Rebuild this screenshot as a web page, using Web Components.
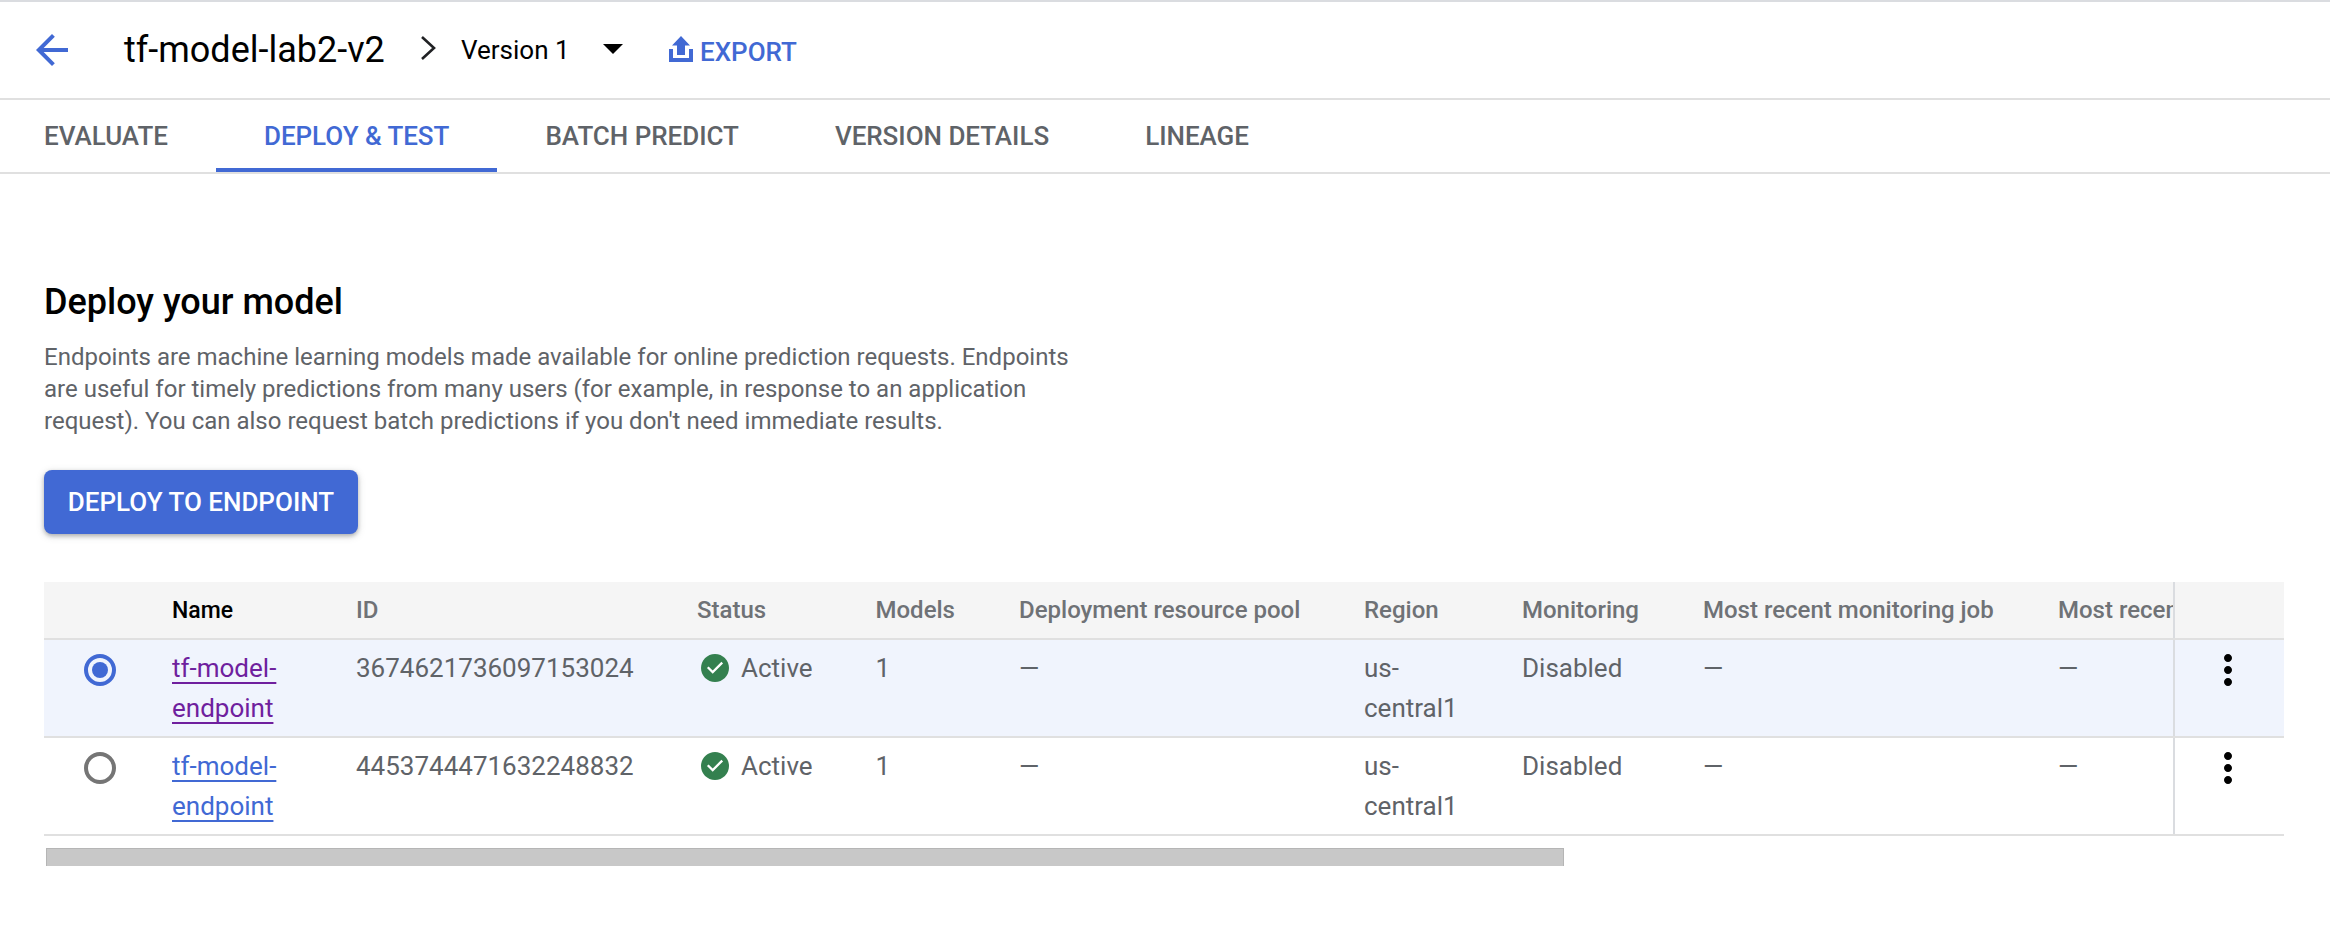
<!DOCTYPE html>
<html lang="en"><head><meta charset="utf-8"><title>Deploy your model</title>
<style>
html,body{margin:0;padding:0;background:#fff}
body{font-family:Roboto,"Liberation Sans",sans-serif;width:2330px;height:930px;overflow:hidden}
</style></head><body>
<app-page>
  <model-header title-text="tf-model-lab2-v2" version="Version 1"></model-header>
  <model-tabs>
    <tab-item style="--pl:44px;--pr:48px">EVALUATE</tab-item>
    <tab-item active>DEPLOY &amp; TEST</tab-item>
    <tab-item>BATCH PREDICT</tab-item>
    <tab-item>VERSION DETAILS</tab-item>
    <tab-item>LINEAGE</tab-item>
  </model-tabs>
  <deploy-intro>
    <span slot="title">Deploy your model</span>
    Endpoints are machine learning models made available for online prediction requests. Endpoints are useful for timely predictions from many users (for example, in response to an application request). You can also request batch predictions if you don't need immediate results.
    <span slot="action">DEPLOY TO ENDPOINT</span>
  </deploy-intro>
  <endpoint-table>
    <table-row head>
      <table-cell></table-cell><table-cell head strong>Name</table-cell><table-cell head>ID</table-cell><table-cell head>Status</table-cell><table-cell head>Models</table-cell><table-cell head>Deployment resource pool</table-cell><table-cell head>Region</table-cell><table-cell head>Monitoring</table-cell><table-cell head>Most recent monitoring job</table-cell><table-cell head>Most recent monitoring job status</table-cell><table-cell head action></table-cell>
    </table-row>
    <table-row selected>
      <table-cell><radio-mark checked></radio-mark></table-cell><table-cell><end-link visited>tf-model- endpoint</end-link></table-cell><table-cell>3674621736097153024</table-cell><table-cell><status-active>Active</status-active></table-cell><table-cell>1</table-cell><table-cell>—</table-cell><table-cell>us-<br>central1</table-cell><table-cell>Disabled</table-cell><table-cell>—</table-cell><table-cell>—</table-cell><table-cell action><kebab-icon></kebab-icon></table-cell>
    </table-row>
    <table-row>
      <table-cell><radio-mark></radio-mark></table-cell><table-cell><end-link>tf-model- endpoint</end-link></table-cell><table-cell>4453744471632248832</table-cell><table-cell><status-active>Active</status-active></table-cell><table-cell>1</table-cell><table-cell>—</table-cell><table-cell>us-<br>central1</table-cell><table-cell>Disabled</table-cell><table-cell>—</table-cell><table-cell>—</table-cell><table-cell action><kebab-icon></kebab-icon></table-cell>
    </table-row>
  </endpoint-table>
</app-page>
<script>
function def(name, css, html){
  customElements.define(name, class extends HTMLElement{
    constructor(){super();const r=this.attachShadow({mode:'open'});
      r.innerHTML='<style>'+css+'</style>'+html;}
  });
}
const BLUE='#4169d4';
def('app-page',':host{display:block;border-top:2px solid #dadce0;font-family:Roboto,"Liberation Sans",sans-serif}','<slot></slot>');

customElements.define('model-header', class extends HTMLElement{
  constructor(){super();this.attachShadow({mode:'open'});}
  connectedCallback(){
    this.shadowRoot.innerHTML=`<style>
    :host{display:flex;align-items:center;height:96px;border-bottom:2px solid #e0e0e0;box-sizing:content-box}
    svg{display:block;flex:none}
    .back{margin-left:28px;width:48px;height:48px}
    .title{margin-left:48px;font-size:36px;line-height:40px;color:#000;width:262px;white-space:nowrap}
    .chev{margin-left:22px;width:40px;height:40px;margin-top:-4px}
    .ver{margin-left:13px;font-size:26px;line-height:32px;color:#000;width:118px;white-space:nowrap}
    .tri{margin-left:24px;width:20px;height:10px;margin-top:-2px}
    .exp{margin-left:46px;width:24px;height:26px;margin-top:-2px}
    .lab{margin-left:7px;font-size:26px;line-height:32px;font-weight:500;color:${BLUE};margin-top:4px}
    </style>
    <svg class="back" viewBox="0 0 24 24" fill="${BLUE}"><path d="M20 11H7.83l5.59-5.59L12 4l-8 8 8 8 1.41-1.41L7.83 13H20v-2z"/></svg>
    <span class="title">${this.getAttribute('title-text')}</span>
    <svg class="chev" viewBox="0 0 40 40" fill="none" stroke="#202124" stroke-width="2.6"><path d="M14 9l12 11-12 11"/></svg>
    <span class="ver">${this.getAttribute('version')}</span>
    <svg class="tri" viewBox="0 0 20 10" fill="#000"><path d="M0 0h20L10 10z"/></svg>
    <svg class="exp" viewBox="0 0 24 26" fill="${BLUE}"><path d="M12 0l9 9.5h-5V19H8V9.5H3z"/><path d="M0 13h4v9h16v-9h4v13H0z"/></svg>
    <span class="lab">EXPORT</span>`;
  }
});

def('model-tabs',':host{display:flex;height:72px;border-bottom:2px solid #e0e0e0}','<slot></slot>');
def('tab-item',`:host{display:block;box-sizing:border-box;height:72px;padding:10px var(--pr,48px) 0 var(--pl,48px);font-size:26px;font-weight:500;line-height:52px;color:#5f6368;white-space:nowrap;letter-spacing:-.03px}
:host([active]){color:${BLUE};border-bottom:4px solid ${BLUE}}`,'<slot></slot>');

def('deploy-intro',`:host{display:block;padding:108px 0 0 44px}
.t{font-size:36px;line-height:40px;font-weight:500;color:#000}
.p{margin-top:19px;width:1040px;font-size:24px;line-height:32px;color:#5f6368}
.b{display:inline-block;box-sizing:border-box;margin-top:33px;height:64px;width:314px;border-radius:8px;background:${BLUE};color:#fff;font-size:26px;font-weight:500;line-height:64px;text-align:center;box-shadow:0 2px 4px rgba(60,64,67,.35),0 2px 8px rgba(60,64,67,.15);white-space:nowrap}`,
`<div class="t"><slot name="title"></slot></div><div class="p"><slot></slot></div><div class="b"><slot name="action"></slot></div>`);

def('endpoint-table',`:host{display:block;margin:48px 46px 0 44px}
.bar{margin:12px 0 0 2px;width:1518px;height:18px;box-sizing:border-box;background:#c8c8c8;border:1px solid #b5b5b5;border-bottom:0}`,
'<slot></slot><div class="bar"></div>');

def('table-row',`:host{display:grid;grid-template-columns:128px 184px 341px 178.5px 143.5px 345px 158px 181px 355px 115px 111px;height:96px;border-bottom:2px solid #e0e0e0;color:#5f6368;font-size:26px;line-height:40px}
:host([head]){height:56px;background:#f5f5f5;font-size:24px;font-weight:500}
:host([selected]){background:#f0f4fd}`,'<slot></slot>');

def('table-cell',`:host{display:block;padding-top:8px;overflow:hidden;white-space:nowrap;min-width:0;box-sizing:border-box}
:host([head]){color:#6f7276}
:host([strong]){color:#000;font-size:23px;padding-top:9px}
:host([action]){border-left:2px solid #dadce0;padding-top:0}`,'<slot></slot>');

def('radio-mark',`:host{display:block;width:32px;height:32px;margin:6px 0 0 40px;box-sizing:border-box;border:4px solid #757575;border-radius:50%;position:relative}
:host([checked]){border-color:${BLUE}}
:host([checked])::after{content:"";position:absolute;left:4px;top:4px;width:16px;height:16px;border-radius:50%;background:${BLUE}}`,'');

customElements.define('end-link',class extends HTMLElement{
  constructor(){super();this.attachShadow({mode:'open'});}
  connectedCallback(){
    const [a,b]=this.textContent.split(' ');
    this.shadowRoot.innerHTML=`<style>:host{display:block;color:${this.hasAttribute('visited')?'#6f1f9e':BLUE}}
    u{text-decoration:underline;text-decoration-thickness:2px;text-underline-offset:5px;text-decoration-skip-ink:none}</style><u>${a}</u><br><u>${b}</u>`;
  }
});

def('status-active',`:host{display:flex;align-items:flex-start;margin-left:4px}
svg{display:block;width:28px;height:28px;margin-top:6px;margin-right:12px;flex:none}`,
`<svg viewBox="2 2 20 20"><path fill="#34804f" d="M12 2C6.48 2 2 6.48 2 12s4.48 10 10 10 10-4.48 10-10S17.52 2 12 2z"/><path fill="#fff" d="M10 17l-5-5 1.41-1.41L10 14.17l7.59-7.59L19 8l-9 9z" transform="translate(12 12) scale(.82) translate(-12 -12)"/></svg><slot></slot>`);

def('kebab-icon',`:host{display:block;width:48px;height:48px;margin:6px 0 0 29px}svg{display:block;width:48px;height:48px}`,
`<svg viewBox="0 0 24 24"><path fill="#000" d="M12 8c1.1 0 2-.9 2-2s-.9-2-2-2-2 .9-2 2 .9 2 2 2zm0 2c-1.1 0-2 .9-2 2s.9 2 2 2 2-.9 2-2-.9-2-2-2zm0 6c-1.1 0-2 .9-2 2s.9 2 2 2 2-.9 2-2-.9-2-2-2z"/></svg>`);
</script>
</body></html>
